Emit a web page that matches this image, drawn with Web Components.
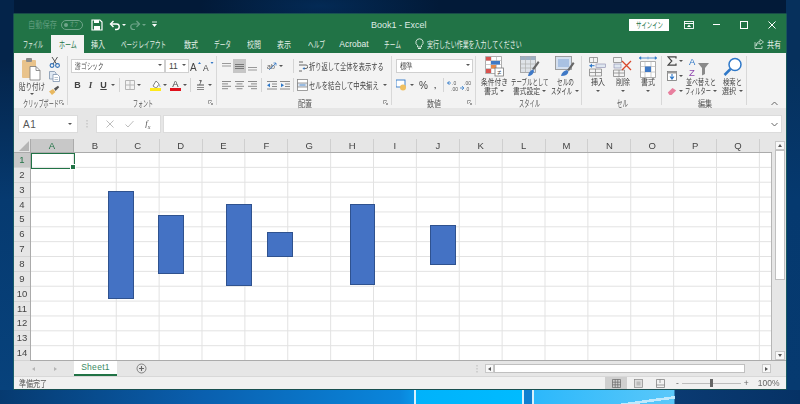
<!DOCTYPE html>
<html lang="ja">
<head>
<meta charset="utf-8">
<title>Book1 - Excel</title>
<style>
  html,body{ margin:0; width:800px; height:404px; overflow:hidden; }
  body{
    font-family:"Noto Sans CJK JP","Liberation Sans",sans-serif;
    background:
      linear-gradient(172deg, transparent 0 76%, #bfe9fd 76% 84%, transparent 84%) 534px 390px / 141px 14px no-repeat,
      linear-gradient(90deg, transparent 0 414.5px, #d7f1fc 414.5px 416px, transparent 416px 522px, #d7f1fc 522px 524px, transparent 524px 532px, #d7f1fc 532px 534px, transparent 534px) 0 390px / 100% 14px no-repeat,
      linear-gradient(90deg, #063a70 0, #0a5fae 200px, #0a86dc 400px, #0a96e8 414px, #00b2fb 416px, #00bbff 522px, #0f7fd0 524px, #0f7fd0 532px, #2cb8fb 534px, #5ac8fa 674px, #0a3a72 675px, #063265 800px) 0 390px / 100% 14px no-repeat,
      linear-gradient(180deg, #06305c 60px, #05396f 200px, #063a70 390px) 786px 0 / 14px 100% no-repeat,
      linear-gradient(180deg, #04244a 60px, #063a70 200px, #07427c 390px) 0 0 / 14px 100% no-repeat,
      radial-gradient(120px 30px at 320px 6px, #032a55, #021a38) 0 0 / 100% 14px no-repeat,
      #04244a;
  }
</style>
</head>
<body>
<x-window>
  <x-titlebar></x-titlebar>
  <x-tabs></x-tabs>
  <x-ribbon></x-ribbon>
  <x-formulabar></x-formulabar>
  <x-sheet></x-sheet>
  <x-sheettabs></x-sheettabs>
  <x-status></x-status>
</x-window>

<script>
(function(){
  // 共通: 細いフォントが無いので横方向に縮めて幅を合わせる
  const BASE = `
    :host{box-sizing:border-box}
    *{box-sizing:border-box}
    svg{display:block;flex:none}
    .t{display:inline-block;white-space:nowrap;overflow:visible;line-height:1}
    .t>span{display:inline-block;transform-origin:0 50%}
    .sp{flex:none}
  `;
  function t(text, w, size){
    size = size || 9;
    let n = 0;
    for (const ch of text) n += ch.charCodeAt(0) < 256 ? 0.55 : 1;
    const s = (w / (n * size)).toFixed(3);
    return `<span class="t" style="width:${w}px;font-size:${size}px"><span style="transform:scaleX(${s})">${text}</span></span>`;
  }
  function comp(name, css, html){
    customElements.define(name, class extends HTMLElement {
      constructor(){
        super();
        this.attachShadow({mode:'open'});
        this.shadowRoot.innerHTML = `<style>${BASE}${css}</style>` + (typeof html === 'function' ? html(this) : html);
      }
    });
  }
  const svg = (w,h,body) => `<svg width="${w}" height="${h}" viewBox="0 0 ${w} ${h}">${body}</svg>`;

  // ───── 小物 ─────
  comp('x-caret', `:host{display:flex;flex:none;width:var(--w,6px);justify-content:center;align-items:center}
    i{display:block;border-top:2.5px solid var(--c,#555);border-left:2px solid transparent;border-right:2px solid transparent}`, `<i></i>`);
  comp('x-tool', `:host{display:flex;flex:none;align-items:center;justify-content:center;height:14px;font-size:9px;color:#444}`, `<slot></slot>`);
  comp('x-sep', `:host{display:flex;flex:none;justify-content:center;height:14px}
    i{display:block;width:1px;background:#d4d4d4}`, `<i></i>`);
  comp('x-row', `:host{display:flex;align-items:center;height:14px}`, `<slot></slot>`);
  comp('x-col', `:host{display:flex;flex-direction:column;gap:5px;padding-top:6px}`, `<slot></slot>`);
  comp('x-select', `:host{display:flex;flex:none;align-items:center;height:14px;background:#fff;border:1px solid #d0d0d0;
      font:8.5px "Liberation Sans",sans-serif;color:#444;padding-left:3px;position:relative}
    x-caret{position:absolute;right:1px;top:4px}`,
    el => `<slot></slot><x-caret></x-caret>`);
  comp('x-group', `:host{display:flex;flex-direction:column;flex:none;height:55px;position:relative;color:#444}
    .c{flex:1;display:flex;min-height:0}
    .l{height:11px;display:flex;justify-content:center;color:#555;padding-top:1.5px}
    .bar{position:absolute;right:0;top:3px;bottom:3px;width:1px;background:#d8d8d8}
    .lau{position:absolute;right:4px;bottom:3px}`,
    el => `<div class="c"><slot></slot></div><div class="l">${t(el.getAttribute('label'), +el.getAttribute('lw'))}</div>
      <div class="bar"></div>
      ${el.hasAttribute('launcher') ? `<div class="lau">${svg(5,5,'<path d="M.5.5h3v1M.5.5v3h1M2 2l2.5 2.5M4.5 3v1.5H3" fill="none" stroke="#888" stroke-width=".8"/>')}</div>` : ''}`);
  comp('x-big', `:host{display:flex;flex-direction:column;align-items:center;flex:none;padding-top:3px;color:#444}
    .i{height:21px;display:flex;align-items:center;justify-content:center}
    .ln{height:9px;display:flex;align-items:center;gap:2px;justify-content:center}`,
    el => {
      const a = (el.getAttribute('l1')||'').split('|');
      const b = (el.getAttribute('l2')||'').split('|');
      return `<div class="i"><slot></slot></div>
        <div class="ln">${t(a[0], +a[1], 8.5)}</div>
        <div class="ln">${b[0] ? t(b[0], +b[1], 8.5) : ''}<x-caret style="--w:5px"></x-caret></div>`;
    });

  // ───── アイコン ─────
  const I = {
    paste: svg(22,24,`<rect x="1" y="3" width="14" height="18" rx="1" fill="#e9c38b"/><rect x="5" y="1" width="6" height="4" rx="1" fill="#8b8b8b"/><path d="M9 9.5h6l4 4V23H9z" fill="#fff" stroke="#777" stroke-width=".8"/><path d="M15 9.5v4h4" fill="none" stroke="#777" stroke-width=".8"/>`),
    cut: svg(11,12,`<path d="M3 1l4.5 7M8.500 1L4 8" stroke="#555" stroke-width="1" fill="none"/><circle cx="3" cy="9.500" r="1.900" fill="none" stroke="#2f6fb5" stroke-width="1.100"/><circle cx="8.500" cy="9.500" r="1.900" fill="none" stroke="#2f6fb5" stroke-width="1.100"/>`),
    copy: svg(11,11,`<path d="M.5.5h5L7 2v6H.5z" fill="#dfe8f2" stroke="#7d93ad" stroke-width=".8"/><path d="M4 3.500h4.500l2 2v5H4z" fill="#fff" stroke="#7d93ad" stroke-width=".8"/><path d="M5.500 6.500H9M5.500 8.500H9" stroke="#9ab" stroke-width=".7"/>`),
    brush: svg(12,10,`<path d="M1 6.500L5 4l2.500 3L4 10z" fill="#e8b860"/><path d="M6 3.500L10 .8l1.200 1.400L7.500 6z" fill="#555"/>`),
    bold: `<b style="font:bold 9px 'Liberation Sans',sans-serif">B</b>`,
    ital: `<i style="font:italic bold 9px 'Liberation Serif',serif">I</i>`,
    under: `<span style="font:bold 9px 'Liberation Sans',sans-serif;text-decoration:underline">U</span>`,
    border: svg(10,10,`<path d="M.5.5h9v9h-9zM5 .5v9M.5 5h9" fill="none" stroke="#b5b5b5" stroke-width="1"/>`),
    fill: svg(11,12,`<path d="M3 7l3-5 3.200 3-3 4.200z" fill="#fff" stroke="#666" stroke-width=".8"/><path d="M9.500 5.500c.8 1 1 2 .6 2.600-.5-.3-.8-1.200-.6-2.600z" fill="#4a7fc4"/><rect x="0" y="9" width="11" height="3" fill="#ffe91a"/>`),
    color: svg(11,12,`<text x="5.500" y="8" text-anchor="middle" font-family="Liberation Sans,sans-serif" font-size="9.500" fill="#444">A</text><rect x="0" y="9" width="11" height="3" fill="#e0101c"/>`),
    phon: svg(9,12,`<text x="4.500" y="5" text-anchor="middle" font-family="Noto Sans CJK JP,sans-serif" font-size="5.500" font-weight="bold" fill="#444">ｱ</text><rect x="1" y="5.500" width="7" height="1" fill="#555"/><rect x="1" y="8" width="7" height="1" fill="#888"/><rect x="1" y="10" width="7" height="1" fill="#888"/>`),
    grow: svg(11,11,`<text x="0" y="10" font-family="Liberation Sans,sans-serif" font-size="10" fill="#444">A</text><path d="M8 3l1.500-2L11 3z" fill="#3578c6"/>`),
    shrink: svg(11,11,`<text x="0" y="10" font-family="Liberation Sans,sans-serif" font-size="8.500" fill="#444">A</text><path d="M7.500 1L9 3l1.500-2z" fill="#3578c6"/>`),
    lines(kind){
      const x = {l:[[0,9],[0,6],[0,9],[0,6]], c:[[0,9],[1.5,6],[0,9],[1.5,6]], r:[[0,9],[3,6],[0,9],[3,6]]}[kind];
      return svg(9,9, x.map((v,i)=>`<rect x="${v[0]}" y="${i*2.4}" width="${v[1]}" height="1" fill="#8a8a8a"/>`).join(''));
    },
    vtop: svg(9,9,`<rect y="1" width="9" height="1" fill="#999"/><rect y="3.500" width="9" height="1" fill="#999"/>`),
    vmid: svg(9,9,`<rect y="2" width="9" height="1" fill="#777"/><rect y="4" width="9" height="1" fill="#777"/><rect y="6" width="9" height="1" fill="#777"/>`),
    vbot: svg(9,9,`<rect y="5" width="9" height="1" fill="#999"/><rect y="7.500" width="9" height="1" fill="#999"/>`),
    orient: svg(10,10,`<text x="0" y="8" font-family="Liberation Sans,sans-serif" font-size="7" fill="#555">ab</text><path d="M2 9l7-7M9 2H6.500M9 2v2.500" stroke="#3578c6" stroke-width=".8" fill="none"/>`),
    indL: svg(10,9,`<path d="M0 .5h10M5 3h5M5 5.500h5M0 8h10" stroke="#8a8a8a" stroke-width="1"/><path d="M0 4.200l3-2v4z" fill="#2f78c8"/>`),
    indR: svg(10,9,`<path d="M0 .5h10M5 3h5M5 5.500h5M0 8h10" stroke="#8a8a8a" stroke-width="1"/><path d="M4 4.200l-3-2v4z" fill="#2f78c8"/>`),
    wrap: svg(10,12,`<path d="M1 2h4M1 5h7a1.500 1.500 0 0 1 0 3.500H5M1 11h3" fill="none" stroke="#666" stroke-width="1"/><path d="M6.500 7l-2 1.500 2 1.500z" fill="#2f78c8"/>`),
    merge: svg(11,12,`<rect x=".5" y=".5" width="10" height="11" fill="#fff" stroke="#888" stroke-width=".8"/><rect x=".5" y="4" width="10" height="4" fill="#dfe7f0" stroke="#888" stroke-width=".8"/><path d="M2.500 6h6" stroke="#2f78c8" stroke-width=".8"/>`),
    cur: svg(11,12,`<rect x="0" y="1" width="9" height="7" fill="#fff" stroke="#2f78c8" stroke-width=".9"/><circle cx="7" cy="8.500" r="3" fill="#f0c060"/>`),
    comma: `<b style="font:bold 8px 'Liberation Sans',sans-serif">,</b>`,
    dec1: svg(13,11,`<text x="5" y="5" font-family="Liberation Sans,sans-serif" font-size="5" fill="#555">.0</text><text x="4" y="10.500" font-family="Liberation Sans,sans-serif" font-size="5" fill="#555">.00</text><path d="M0 3h4M2.500 1L.8 3l1.700 2" stroke="#2f78c8" stroke-width=".8" fill="none"/>`),
    dec2: svg(13,11,`<text x="4" y="5" font-family="Liberation Sans,sans-serif" font-size="5" fill="#555">.00</text><text x="5" y="10.500" font-family="Liberation Sans,sans-serif" font-size="5" fill="#555">.0</text><path d="M0 8h4M2 6l1.800 2L2 10" stroke="#2f78c8" stroke-width=".8" fill="none"/>`),
    cond: svg(19,21,`<path d="M.5.5h16v17H.5z" fill="#fff" stroke="#9a9a9a" stroke-width=".8"/><path d="M6 .5v17M11.500 .5v17M.5 4.500h16M.5 8.500h16M.5 12.500h16" stroke="#b5b5b5" stroke-width=".7"/><rect x="1" y="1" width="5" height="3.500" fill="#d9534f"/><rect x="6" y="5" width="9" height="3.500" fill="#3f79c6"/><rect x="6" y="9" width="5" height="3.500" fill="#e8894a"/><rect x="1" y="13" width="5" height="4" fill="#d9534f"/><rect x="10" y="12" width="8.500" height="8" fill="#fff" stroke="#777" stroke-width=".8"/><text x="14.300" y="18.500" text-anchor="middle" font-family="Liberation Sans,sans-serif" font-size="7" fill="#444">≠</text>`),
    table: svg(20,21,`<rect x=".5" y=".5" width="15" height="16" fill="#dfe3e8" stroke="#9a9a9a" stroke-width=".8"/><rect x=".5" y=".5" width="15" height="3.500" fill="#9fb0c4"/><path d="M5.500 .5v16M10.500 .5v16M.5 8h15M.5 12h15" stroke="#b0b0b0" stroke-width=".7"/><path d="M12 13L18 5l1.500 1.500L14 14z" fill="#666"/><path d="M8 20c.5-3 2-5.500 5-6.500l1 1.500c-.5 3-3 5-6 5z" fill="#3f79c6"/>`),
    cell: svg(20,21,`<rect x=".5" y=".5" width="16" height="13" fill="#d4dfee" stroke="#8a8a8a" stroke-width=".8"/><rect x="3" y="3" width="11" height="8" fill="#a9c1e2"/><path d="M12 14L18 6l1.500 1.500L14 15z" fill="#666"/><path d="M6 20c.5-3 3-5.500 6-6l1.500 1.500c-.5 3-3 4.500-7.500 4.500z" fill="#3f79c6"/>`),
    ins: svg(17,20,`<path d="M.5.5h8v5h-8zM.5 12h12v7H.5zM6.500 12v7M.5 15.500h12" fill="none" stroke="#888" stroke-width=".8"/><rect x="7" y="7" width="9.500" height="3.500" fill="#dfe7f0" stroke="#88a" stroke-width=".6"/><path d="M.5 8.700h5" stroke="#2f78c8" stroke-width="1"/><path d="M3 6.500L.5 8.700 3 11z" fill="#2f78c8"/><path d="M4.500 .5v5" stroke="#888" stroke-width=".6"/>`),
    del: svg(19,20,`<path d="M.5.5h8v5h-8zM.5 13h11v6.500H.5zM6 13v6.500M.5 16h11" fill="none" stroke="#888" stroke-width=".8"/><rect x="1" y="7" width="7" height="4" fill="#dfe7f0" stroke="#88a" stroke-width=".6"/><path d="M9 4l9 9M18 4l-9 9" stroke="#d9482b" stroke-width="1.300"/>`),
    fmt: svg(18,22,`<path d="M1.500 5.500h15v16h-15z" fill="#fff" stroke="#999" stroke-width=".8"/><path d="M6 5.500v16M12 5.500v16M1.500 10.500h15M1.500 16h15" stroke="#b8b8b8" stroke-width=".7"/><rect x="6" y="10.500" width="6" height="5.500" fill="#3f79c6"/><path d="M.5 2h17" stroke="#2f78c8" stroke-width=".8"/><path d="M0 2l2-1.500v3zM18 2l-2-1.500v3zM9 .5v3" fill="#2f78c8" stroke="#2f78c8" stroke-width=".4"/>`),
    sigma: svg(10,10,`<path d="M9 2.500V.8H1L4.800 5 1 9.200h8V7.500" fill="none" stroke="#444" stroke-width="1.200"/>`),
    filld: svg(10,10,`<rect x=".5" y=".5" width="9" height="9" fill="#fff" stroke="#777" stroke-width=".8"/><rect x=".5" y=".5" width="9" height="2" fill="#999"/><path d="M5 3v4M3 5.500L5 8l2-2.500" fill="none" stroke="#2f78c8" stroke-width="1.100"/>`),
    erase: svg(10,9,`<path d="M.8 5.500L5.500 1l3.700 2.500L4.500 8h-2z" fill="#e87f9e"/>`),
    sort: svg(26,22,`<text x="1" y="9" font-family="Liberation Sans,sans-serif" font-size="9.500" fill="#2f78c8">A</text><text x="1" y="20" font-family="Liberation Sans,sans-serif" font-size="9.500" fill="#8e44ad">Z</text><path d="M10 7h11l-4 5v6l-3 1.500V12z" fill="#8a8a8a"/>`),
    find: svg(20,20,`<circle cx="12" cy="7.500" r="6" fill="#fff" stroke="#2f78c8" stroke-width="1.500"/><path d="M7.500 12l-6 6" stroke="#2f78c8" stroke-width="2.500"/>`),
    save: svg(12,12,`<path d="M1 1h8l2 2v8H1z" fill="none" stroke="#fff" stroke-width="1.200"/><rect x="3" y="1" width="5" height="3" fill="#fff"/><rect x="3" y="7" width="6" height="4" fill="#fff"/>`),
    undo: svg(12,12,`<path d="M4.500 2l-3 3 3 3" fill="none" stroke="#fff" stroke-width="1.400"/><path d="M2 5h5.500a2.700 2.700 0 0 1 0 5.500H6" fill="none" stroke="#fff" stroke-width="1.400"/>`),
    redo: svg(12,12,`<path d="M7.500 2l3 3-3 3" fill="none" stroke="#6fa58a" stroke-width="1.200"/><path d="M10 5H4.500a2.700 2.700 0 0 0 0 5.500H6" fill="none" stroke="#6fa58a" stroke-width="1.200"/>`),
    custom: svg(5,7,`<path d="M0 1h5" stroke="#fff" stroke-width=".8"/><path d="M0 3l2.500 3L5 3z" fill="#fff"/>`),
    display: svg(10,8,`<rect x=".5" y=".5" width="9" height="7" fill="none" stroke="#fff" stroke-width=".9"/><path d="M.5 2.500h9" stroke="#fff"/><path d="M5 3.500L3 6h4z" fill="#fff"/>`),
    min: svg(7,1,`<rect width="7" height="1" fill="#fff"/>`),
    max: svg(8,8,`<rect x=".5" y=".5" width="7" height="7" fill="none" stroke="#fff"/>`),
    close: svg(8,8,`<path d="M.5.5l7 7M7.500 .5l-7 7" stroke="#fff" stroke-width="1"/>`),
    bulb: svg(9,12,`<path d="M4.500 .8a3.600 3.600 0 0 1 2 6.600V9h-4V7.400a3.600 3.600 0 0 1 2-6.600z" fill="none" stroke="#e4efe8" stroke-width=".9"/><path d="M3 10.500h3" stroke="#e4efe8"/>`),
    share: svg(10,10,`<path d="M6 .5L9.500 3 6 5.500V4C4 4 2.500 5 2 7c0-3 2-4.500 4-4.500z" fill="none" stroke="#e4efe8" stroke-width=".7"/><path d="M1 3v6.500h7V7" fill="none" stroke="#e4efe8" stroke-width=".7"/>`),
    xmark: svg(8,8,`<path d="M.5.5l7 7M7.500 .5l-7 7" stroke="#b5b5b5" stroke-width=".9"/>`),
    check: svg(9,8,`<path d="M.5 4.500L3 7l5.500-6" fill="none" stroke="#b5b5b5" stroke-width=".9"/>`),
    plus: svg(11,11,`<circle cx="5.500" cy="5.500" r="4.500" fill="none" stroke="#777" stroke-width=".9"/><path d="M5.500 3v5M3 5.500h5" stroke="#666" stroke-width="1.100"/>`),
    vNormal: svg(9,9,`<path d="M.5.5h8v8h-8zM3.200 .5v8M5.800 .5v8M.5 3.200h8M.5 5.800h8" fill="none" stroke="#666" stroke-width=".7"/>`),
    vLayout: svg(9,9,`<rect x=".5" y=".5" width="8" height="8" fill="#ddd" stroke="#888" stroke-width=".7"/><rect x="2.500" y="2.500" width="4" height="4" fill="#bbb"/>`),
    vBreak: svg(9,9,`<path d="M.5.5h8v8h-8zM.5 6h8M4 .5V4" fill="none" stroke="#777" stroke-width=".7"/>`),
  };

  // ───── タイトルバー ─────
  comp('x-titlebar', `:host{display:flex;align-items:center;height:21px;background:#217346;color:#fff;flex:none}
    .auto{margin-left:14px;color:#5e9c7d;width:29px;display:flex}
    .tog{margin-left:4px;width:22px;height:10px;border:1px solid #6fa58a;border-radius:5px;display:flex;align-items:center;padding-left:2px;gap:2px;color:#6fa58a}
    .tog i{width:4px;height:4px;border-radius:50%;background:#6fa58a;flex:none}
    .name{font:9px "Liberation Sans",sans-serif;color:#dfece5;width:52px;white-space:nowrap}
    .sign{width:40px;height:12px;background:#fff;color:#217346;display:flex;align-items:center;justify-content:center}
    .g{flex:1}`,
    `<span class="auto">${t('自動保存',29)}</span>
     <span class="tog"><i></i>${t('オフ',8,5.5)}</span>
     <x-tool style="width:14px;margin-left:7px">${I.save}</x-tool>
     <x-tool style="width:13px;margin-left:4px">${I.undo}</x-tool>
     <x-caret style="--c:#fff;--w:5px"></x-caret>
     <x-tool style="width:12px;margin-left:3px">${I.redo}</x-tool>
     <x-caret style="--c:#6fa58a;--w:6px"></x-caret>
     <x-tool style="width:5px;margin-left:5px">${I.custom}</x-tool>
     <span class="sp" style="width:214px"></span>
     <span class="name">Book1 - Excel</span>
     <span class="g"></span>
     <span class="sign">${t('サインイン',27,8.5)}</span>
     <x-tool style="width:18px;margin-left:11px">${I.display}</x-tool>
     <x-tool style="width:18px;margin-left:9px">${I.min}</x-tool>
     <x-tool style="width:18px;margin-left:10px">${I.max}</x-tool>
     <x-tool style="width:18px;margin-left:10px">${I.close}</x-tool>
     <span class="sp" style="width:5px"></span>`);

  // ───── タブ ─────
  const TABS = [['ファイル',20,36,0],['ホーム',18,33,1],['挿入',14,28],['ページ レイアウト',47,64],['数式',14,30],['データ',17,32],['校閲',14,32],['表示',14,28],['ヘルプ',17,36],['Acrobat',27,40],['チーム',17,36]];
  comp('x-tabs', `:host{display:flex;align-items:stretch;height:18px;background:#217346;color:#e6f0ea;flex:none;padding-left:1px}
    .tab{display:flex;align-items:center;justify-content:center;flex:none}
    .on{background:#f3f3f3;color:#217346}
    .hint{display:flex;align-items:center;gap:3px}
    .g{flex:1}
    .lat{font:8.5px "Liberation Sans",sans-serif}`,
    `${TABS.map(x => `<span class="tab ${x[3] ? 'on' : ''}" style="width:${x[2]}px">${x[0]==='Acrobat' ? `<span class="lat">${x[0]}</span>` : t(x[0],x[1])}</span>`).join('')}
     <span class="hint" style="margin-left:5px">${I.bulb}${t('実行したい作業を入力してください',95)}</span>
     <span class="g"></span>
     <span class="hint">${I.share}${t('共有',14)}</span>
     <span class="sp" style="width:5px"></span>`);

  // ───── リボン ─────
  const tool = (w, inner) => `<x-tool style="width:${w}px">${inner||''}</x-tool>`;
  const caret = (w) => `<x-caret style="--w:${w||6}px"></x-caret>`;
  const sep = (w) => `<x-sep style="width:${w}px"></x-sep>`;
  const gap = (w) => `<span class="sp" style="display:block;width:${w}px"></span>`;
  comp('x-ribbon', `:host{display:flex;height:55px;background:#f3f3f3;flex:none;color:#444;position:relative}
    .clip{display:flex;padding-left:3px}
    .pasteb{display:flex;flex-direction:column;align-items:center;width:30px;padding-top:4px}
    .pasteb .lbl{display:flex;margin-top:1px}
    .clipc{display:flex;flex-direction:column;align-items:center;gap:1px;padding-top:3px}
    .tx{display:flex;align-items:center}
    .bigs{display:flex}
    .stack{display:flex;flex-direction:column;gap:3px;padding-top:2px}
    .collapse{position:absolute;right:8px;bottom:2px}`,
    `<x-group label="クリップボード" lw="36" launcher style="width:54px">
       <div class="clip">
         <div class="pasteb">${I.paste}<span class="lbl">${t('貼り付け',26)}</span><x-caret style="margin-top:2px"></x-caret></div>
         <div class="clipc" style="margin-left:1px">
           <div>${I.cut}</div><div style="display:flex;align-items:center;margin-top:2px">${I.copy}</div><div style="margin-top:2px">${I.brush}</div>
         </div>
       </div>
     </x-group>

     <x-group label="フォント" lw="20" launcher style="width:149px">
       <x-col style="padding-left:3px">
         <x-row>
           <x-select style="width:94px">${t('游ゴシック',29)}</x-select>
           <x-select style="width:24px">11</x-select>
           ${tool(13,I.grow)}${tool(13,I.shrink)}
         </x-row>
         <x-row>
           ${tool(13,I.bold)}${tool(13,I.ital)}${tool(13,I.under)}${caret(6)}${sep(7)}
           ${tool(13,I.border)}${caret(6)}${gap(6)}${tool(14,I.fill)}${caret(5)}${gap(1)}${tool(14,I.color)}${caret(6)}${sep(5)}${tool(14,I.phon)}${caret(6)}
         </x-row>
       </x-col>
     </x-group>

     <x-group label="配置" lw="14" launcher style="width:175px">
       <x-col style="padding-left:3px">
         <x-row>
           ${tool(13,I.vtop)}<x-tool style="width:13px;background:#c6c6c6">${I.vmid}</x-tool>${tool(13,I.vbot)}${sep(5)}${gap(1)}
           ${tool(13,I.orient)}${caret(6)}${gap(6)}${sep(6)}
           ${tool(13,I.wrap)}<span class="tx">${t('折り返して全体を表示する',75)}</span>
         </x-row>
         <x-row>
           ${tool(13,I.lines('l'))}${tool(13,I.lines('c'))}${tool(13,I.lines('r'))}${sep(5)}${gap(1)}
           ${tool(13,I.indL)}${tool(13,I.indR)}${sep(5)}
           ${tool(13,I.merge)}<span class="tx">${t('セルを結合して中央揃え',70)}</span>${gap(3)}${caret(5)}
         </x-row>
       </x-col>
     </x-group>

     <x-group label="数値" lw="14" launcher style="width:84px">
       <x-col style="padding-left:4px">
         <x-row><x-select style="width:77px">${t('標準',13)}</x-select></x-row>
         <x-row>
           ${tool(11,I.cur)}${gap(2)}${caret(5)}${gap(3)}${tool(13,'<span style="font:10px \'Liberation Sans\',sans-serif">%</span>')}${tool(10,I.comma)}${sep(6)}${tool(14,I.dec1)}${tool(13,I.dec2)}
         </x-row>
       </x-col>
     </x-group>

     <x-group label="スタイル" lw="21" style="width:106px">
       <div class="bigs" style="padding-left:2px">
         <x-big style="width:32px" l1="条件付き|27" l2="書式|14">${I.cond}</x-big>
         <x-big style="width:39px" l1="テーブルとして|38" l2="書式設定|27">${I.table}</x-big>
         <x-big style="width:32px" l1="セルの|17" l2="スタイル|21">${I.cell}</x-big>
       </div>
     </x-group>

     <x-group label="セル" lw="11" style="width:80px">
       <div class="bigs" style="padding-left:3px">
         <x-big style="width:25px" l1="挿入|14">${I.ins}</x-big>
         <x-big style="width:25px" l1="削除|14">${I.del}</x-big>
         <x-big style="width:25px" l1="書式|14">${I.fmt}</x-big>
       </div>
     </x-group>

     <x-group label="編集" lw="14" style="width:85px">
       <div class="bigs" style="padding-left:5px">
         <div class="stack">
           <x-row>${I.sigma}${caret(8)}</x-row>
           <x-row>${I.filld}${caret(8)}</x-row>
           <x-row>${I.erase}${caret(8)}</x-row>
         </div>
         <x-big style="width:34px;margin-left:-1px" l1="並べ替えと|30" l2="フィルター|26">${I.sort}</x-big>
         <x-big style="width:29px" l1="検索と|19" l2="選択|14">${I.find}</x-big>
       </div>
     </x-group>

     <div class="collapse">${svg(7,5,'<path d="M.5 4l3-3 3 3" fill="none" stroke="#666" stroke-width="1"/>')}</div>`);

  // ───── 数式バー ─────
  comp('x-formulabar', `:host{display:flex;height:31px;background:#e6e6e6;padding:7px 4px 6px 4px;flex:none;align-items:stretch;color:#666}
    .box{background:#fff;display:flex;align-items:center;border:1px solid #dcdcdc}
    .name{width:60px;padding-left:4px;font:10px "Liberation Sans",sans-serif;color:#555;justify-content:space-between;padding-right:4px;letter-spacing:.5px}
    .dots{width:18px;display:flex;align-items:center;justify-content:center}
    .btns{width:65px;justify-content:space-around;padding:0 4px;margin-right:2px}
    .fx{font:italic 9px "Liberation Serif",serif;color:#555}
    .in{flex:1;justify-content:flex-end;padding-right:3px}`,
    `<div class="box name"><span>A1</span><x-caret></x-caret></div>
     <div class="dots">${svg(2,8,'<path d="M1 0v1.500M1 3v1.500M1 6v1.500" stroke="#b8b8b8"/>')}</div>
     <div class="box btns">${I.xmark}${I.check}<span class="fx">f<sub style="font-size:6px">x</sub></span></div>
     <div class="box in">${svg(7,5,'<path d="M.5 1l3 3 3-3" fill="none" stroke="#666" stroke-width="1"/>')}</div>`);

  // ───── シート ─────
  const COLS = 'ABCDEFGHIJKLMNOPQ'.split('');
  const SHAPES = [[77,38,26,108],[127,62,26,59],[195,51,26,82],[236,79,26,25],[319,51,25,81],[399,72,26,40]];
  comp('x-sheet', `:host{display:flex;height:221px;background:#e6e6e6;flex:none;position:relative}
    .main{width:758px;display:flex;flex-direction:column;flex:none}
    .hd{display:flex;height:14px;flex:none;border-bottom:1px solid #ababab;background:#e6e6e6}
    .corner{width:17px;flex:none;display:flex;align-items:flex-end;justify-content:flex-end;border-right:1px solid #ababab;padding:0 1px 1px 0}
    .ch{width:42.88px;flex:none;text-align:center;font:9.5px/13px "Liberation Sans",sans-serif;color:#444;border-right:1px solid #cfcfcf}
    .ch.on{background:#c8c8c8;color:#217346;border-right-color:#ababab}
    .body{display:flex;flex:1;min-height:0}
    .rows{width:17px;flex:none;display:flex;flex-direction:column;border-right:1px solid #ababab}
    .rh{height:14.86px;font:9.5px/14px "Liberation Sans",sans-serif;text-align:center;color:#444;border-bottom:1px solid #d4d4d4}
    .rh.on{background:#c8c8c8;color:#217346}
    .cv{flex:1;position:relative;background-color:#fff;border-right:1px solid #b5b5b5;
      background-image:linear-gradient(90deg,#e2e2e2 1px,transparent 1px),linear-gradient(#e2e2e2 1px,transparent 1px);
      background-size:42.88px 100%,100% 14.86px;background-position:-1px 0,0 -1px;overflow:hidden}
    .sel{position:absolute;left:0;top:0;width:43.5px;height:15.5px;border:1.5px solid #217346}
    .sel::after{content:"";position:absolute;right:-2.5px;bottom:-2.5px;width:4px;height:4px;background:#217346;border:.5px solid #fff}
    .sh{position:absolute;background:#4472c4;border:1px solid #2f528f}
    .vs{width:14px;flex:none;display:flex;flex-direction:column;align-items:center;padding:2px 0 0 1px;position:relative}
    .b{width:10px;height:9px;background:#f8f8f8;border:1px solid #c8c8c8;display:flex;align-items:center;justify-content:center;flex:none}
    .b i{border-left:2px solid transparent;border-right:2px solid transparent}
    .up{border-bottom:3px solid #555}
    .dn{border-top:3px solid #555}
    .th{width:10px;height:130px;background:#fff;border:1px solid #c0c0c0;flex:none}
    .g{flex:1}`,
    `<div class="main">
       <div class="hd"><div class="corner">${svg(10,10,'<path d="M10 0v10H0z" fill="#b5b5b5"/>')}</div>${COLS.map((c,i) => `<div class="ch ${i===0?'on':''}">${c}</div>`).join('')}</div>
       <div class="body">
         <div class="rows">${Array.from({length:14},(_,i)=>`<div class="rh ${i===0?'on':''}">${i+1}</div>`).join('')}</div>
         <div class="cv">
           ${SHAPES.map(s => `<div class="sh" style="left:${s[0]}px;top:${s[1]}px;width:${s[2]}px;height:${s[3]}px"></div>`).join('')}
           <div class="sel"></div>
         </div>
       </div>
     </div>
     <div class="vs"><div class="b"><i class="up"></i></div><div class="th"></div><div class="g"></div><div class="b"><i class="dn"></i></div></div>`);

  // ───── シートタブ ─────
  comp('x-sheettabs', `:host{display:flex;height:16px;background:#e6e6e6;border-top:1px solid #ababab;flex:none;align-items:center;color:#888}
    .nav{width:60px;display:flex;justify-content:space-around;padding:0 8px 0 9px;flex:none}
    .nav i{border-top:2px solid transparent;border-bottom:2px solid transparent}
    .tab{width:43px;height:15px;margin-top:-1px;background:#fff;color:#3a8a63;border-bottom:2px solid #217346;display:flex;align-items:center;justify-content:center;flex:none;font:8.5px "Liberation Sans",sans-serif;letter-spacing:.3px}
    .plus{margin-left:19px;flex:none}
    .dots{margin-left:329px;flex:none}
    .sb{margin-left:7px;display:flex;align-items:center;flex:none}
    .b{width:9px;height:9px;background:#f8f8f8;border:1px solid #c8c8c8;display:flex;align-items:center;justify-content:center;flex:none}
    .b i{border-top:2px solid transparent;border-bottom:2px solid transparent}
    .l{border-right:3px solid #555}
    .r{border-left:3px solid #555}
    .th{width:251px;height:9px;background:#fff;border:1px solid #c0c0c0;flex:none}
    .tr{width:17px;flex:none}`,
    `<div class="nav"><i style="border-right:3px solid #b5b5b5"></i><i style="border-left:3px solid #b5b5b5"></i></div>
     <div class="tab">Sheet1</div>
     <div class="plus">${I.plus}</div>
     <div class="dots">${svg(2,8,'<path d="M1 0v1.500M1 3v1.500M1 6v1.500" stroke="#b8b8b8"/>')}</div>
     <div class="sb"><div class="b"><i class="l"></i></div><div class="th"></div><div class="tr"></div><div class="b"><i class="r"></i></div></div>`);

  // ───── ステータスバー ─────
  comp('x-status', `:host{display:flex;height:13px;background:#f1f1f1;flex:none;align-items:stretch;color:#555;border-top:1px solid #d8d8d8}
    .msg{margin-left:5px;display:flex;align-items:center;width:586px;flex:none}
    .v{width:22px;display:flex;align-items:center;justify-content:center;flex:none}
    .on{background:#cfcfcf}
    .z{display:flex;align-items:center;flex:none;font:8.5px "Liberation Sans",sans-serif;color:#666}
    .sl{width:59px;height:1px;background:#bdbdbd;position:relative;margin:0 3px}
    .sl i{position:absolute;left:28px;top:-3.5px;width:3px;height:8px;background:#666}`,
    `<div class="msg">${t('準備完了',28)}</div>
     <div class="v on">${I.vNormal}</div><div class="v">${I.vLayout}</div><div class="v">${I.vBreak}</div>
     <div class="z" style="margin-left:5px"><span>-</span><span class="sl"><i></i></span><span>+</span><span style="margin-left:9px">100%</span></div>`);

  // ───── ウィンドウ ─────
  comp('x-window', `:host{display:flex;flex-direction:column;position:absolute;left:14px;top:14px;width:772px;height:375px;
      box-shadow:0 0 0 .5px #2f7d58;filter:blur(.3px)}`, `<slot></slot>`);
})();
</script>
</body>
</html>
